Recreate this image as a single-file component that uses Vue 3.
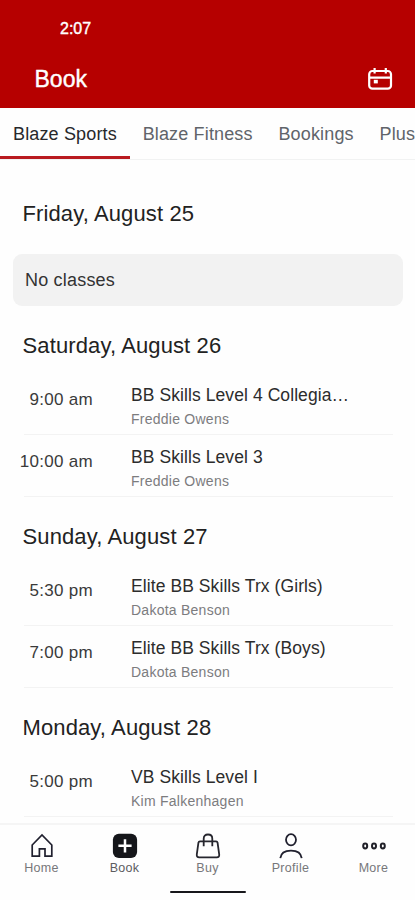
<script setup>
const tabs = ['Blaze Sports', 'Blaze Fitness', 'Bookings', 'Plus']

const days = [
  { date: 'Friday, August 25', classes: [] },
  {
    date: 'Saturday, August 26',
    classes: [
      { time: '9:00 am', title: 'BB Skills Level 4 Collegia…', coach: 'Freddie Owens' },
      { time: '10:00 am', title: 'BB Skills Level 3', coach: 'Freddie Owens' },
    ],
  },
  {
    date: 'Sunday, August 27',
    classes: [
      { time: '5:30 pm', title: 'Elite BB Skills Trx (Girls)', coach: 'Dakota Benson' },
      { time: '7:00 pm', title: 'Elite BB Skills Trx (Boys)', coach: 'Dakota Benson' },
    ],
  },
  {
    date: 'Monday, August 28',
    classes: [{ time: '5:00 pm', title: 'VB Skills Level I', coach: 'Kim Falkenhagen' }],
  },
]
</script>

<template>
  <div class="screen">
    <header class="header">
      <div class="status">2:07</div>
      <div class="bar">
        <h1>Book</h1>
        <svg class="calendar" width="26" height="24" viewBox="0 0 26 24" fill="none" stroke="#fff" stroke-width="2.2">
          <rect x="2.2" y="4" width="21.8" height="17.6" rx="3.2" />
          <path d="M2.2 10.6H24M7.6 1V6.6M18.8 1V6.6" />
          <rect x="6.8" y="12.8" width="4" height="3.6" fill="#fff" stroke="none" />
        </svg>
      </div>
    </header>

    <nav class="tabs">
      <span v-for="(tab, i) in tabs" :key="tab" class="tab" :class="{ active: i === 0 }">{{ tab }}</span>
    </nav>

    <main class="schedule">
      <section v-for="day in days" :key="day.date" class="day">
        <h2>{{ day.date }}</h2>
        <div v-if="!day.classes.length" class="empty">No classes</div>
        <div v-for="item in day.classes" :key="item.time" class="row">
          <span class="time">{{ item.time }}</span>
          <div class="info">
            <div class="title">{{ item.title }}</div>
            <div class="coach">{{ item.coach }}</div>
          </div>
        </div>
      </section>
    </main>

    <footer class="footer">
      <div class="items">
        <div class="item">
          <svg width="26" height="26" viewBox="0 0 26 26" fill="none" stroke="#20202e" stroke-width="1.7">
            <path d="M3.2 12L13 2L22.8 12V23.2H16V15.8H10.4V23.2H3.2Z" />
          </svg>
          <span>Home</span>
        </div>
        <div class="item current">
          <svg width="26" height="26" viewBox="0 0 26 26">
            <rect x="0.9" y="0.8" width="24.2" height="24.2" rx="6" fill="#15161a" />
            <path d="M13 6.2V19.4M6.4 12.8H19.6" stroke="#fff" stroke-width="2.5" />
          </svg>
          <span>Book</span>
        </div>
        <div class="item">
          <svg width="26" height="26" viewBox="0 0 26 26" fill="none" stroke="#26262e" stroke-width="1.8">
            <path d="M5 8.4H21Q22.3 8.4 22.6 9.8L24.2 21.4Q24.5 24.3 21.8 24.3H4.2Q1.5 24.3 1.8 21.4L3.4 9.8Q3.7 8.4 5 8.4Z" />
            <path d="M8.7 13.2V5.7Q8.7 1.5 13 1.5T17.3 5.7V13.2" />
          </svg>
          <span>Buy</span>
        </div>
        <div class="item">
          <svg width="26" height="26" viewBox="0 0 26 26" fill="none" stroke="#20202e" stroke-width="1.8">
            <ellipse cx="13" cy="6.8" rx="5" ry="5.6" />
            <path d="M2.3 25.2C2.8 20.6 6.5 17.6 13 17.6S23.2 20.6 23.7 25.2" />
          </svg>
          <span>Profile</span>
        </div>
        <div class="item">
          <svg width="26" height="26" viewBox="0 0 26 26" fill="none" stroke="#202028" stroke-width="2">
            <ellipse cx="4.2" cy="13" rx="2" ry="2.4" />
            <ellipse cx="13" cy="13" rx="2" ry="2.4" />
            <ellipse cx="21.8" cy="13" rx="2" ry="2.4" />
          </svg>
          <span>More</span>
        </div>
      </div>
      <div class="handle"></div>
    </footer>
  </div>
</template>

<style>
body {
  margin: 0;
  background: #fff;
}
</style>

<style scoped>
.screen {
  display: flex;
  flex-direction: column;
  width: 415px;
  height: 900px;
  overflow: hidden;
  background: #fefefe;
  font-family: 'Liberation Sans', Arial, sans-serif;
  color: #222;
}

.header {
  flex: none;
  box-sizing: border-box;
  height: 108px;
  padding-top: 19px;
  background: #b60000;
  color: #fff;
}

.status {
  padding-left: 60px;
  font-size: 16px;
  line-height: 20px;
  -webkit-text-stroke: 0.4px #fff;
}

.bar {
  display: flex;
  align-items: center;
  justify-content: space-between;
  height: 44px;
  margin-top: 18px;
  padding: 0 22px 0 34.5px;
}

h1 {
  margin: 0;
  font-size: 23px;
  font-weight: 400;
  line-height: 28px;
  -webkit-text-stroke: 0.4px #fff;
}

.tabs {
  flex: none;
  display: flex;
  box-sizing: border-box;
  height: 52px;
  border-bottom: 1px solid #f1f2f2;
  overflow: hidden;
}

.tab {
  flex: none;
  padding: 0 12.8px 0 13px;
  font-size: 18px;
  line-height: 52px;
  letter-spacing: 0.15px;
  color: #60646a;
}

.tab.active {
  box-sizing: border-box;
  height: 51px;
  border-bottom: 3px solid #b91a1f;
  color: #26282b;
}

.schedule {
  flex: 1;
  min-height: 0;
  overflow: hidden;
  padding-top: 14px;
}

h2 {
  margin: 0;
  padding: 27px 22px 14px 22.5px;
  font-size: 22px;
  font-weight: 400;
  line-height: 26px;
  letter-spacing: 0.12px;
}

.empty {
  box-sizing: border-box;
  height: 52px;
  margin: 0 12px 0 13px;
  padding: 0 12px;
  border-radius: 9px;
  background: #f2f2f2;
  font-size: 18px;
  line-height: 52px;
  letter-spacing: 0.2px;
  color: #333;
}

.day:first-child h2 {
  padding-bottom: 27px;
}

.row {
  display: flex;
  box-sizing: border-box;
  height: 62px;
  margin: 0 22px 0 24px;
  border-bottom: 1px solid #f3f3f3;
}

.time {
  display: flex;
  justify-content: flex-end;
  width: 69px;
  padding-top: 17px;
  font-size: 17px;
  line-height: 20px;
  letter-spacing: 0.3px;
  white-space: nowrap;
  color: #3a3a3a;
}

.info {
  padding: 11px 0 0 38px;
}

.title {
  font-size: 17.5px;
  line-height: 22px;
  letter-spacing: 0.08px;
  color: #2c2c2c;
}

.coach {
  padding-top: 4px;
  font-size: 14px;
  line-height: 18px;
  letter-spacing: 0.25px;
  color: #7c7c7e;
}

.footer {
  flex: none;
  box-sizing: border-box;
  height: 77px;
  padding-top: 8px;
  border-top: 2px solid #f5f5f5;
  background: #fefefe;
}

.items {
  display: grid;
  grid-template-columns: repeat(5, 83px);
}

.item {
  display: flex;
  flex-direction: column;
  align-items: center;
  font-size: 12.5px;
  line-height: 16px;
  letter-spacing: 0.3px;
  color: #77777a;
}

.item span {
  padding-top: 1px;
}

.item.current {
  color: #5c5c5f;
}

.handle {
  width: 76px;
  height: 2px;
  margin: 15px auto 0;
  border-radius: 1px;
  background: #17171b;
}
</style>
